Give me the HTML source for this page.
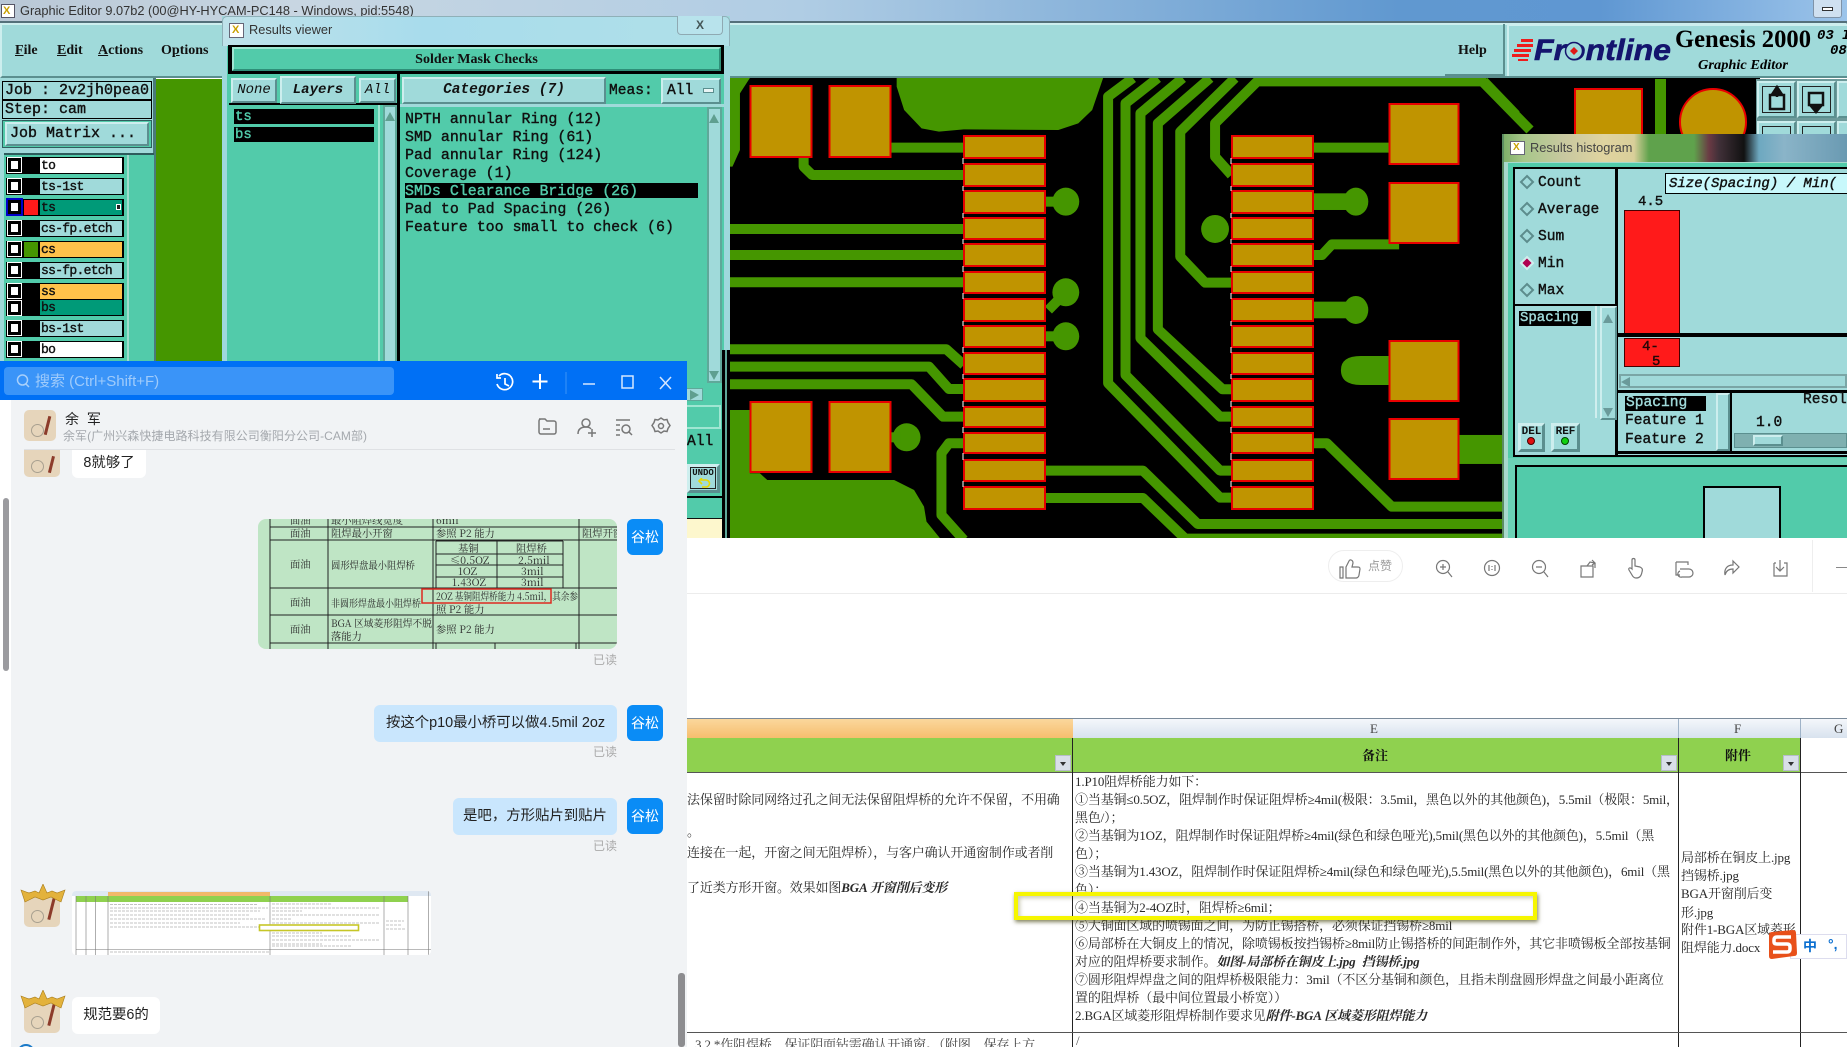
<!DOCTYPE html>
<html lang="zh"><head><meta charset="utf-8"><title>Graphic Editor</title>
<style>
html,body{margin:0;padding:0;width:1847px;height:1047px;overflow:hidden;background:#fff}
body{position:relative;font-family:"Liberation Sans","Noto Sans CJK SC",sans-serif;color:#111}
.a{position:absolute;box-sizing:border-box;white-space:nowrap}
.b{background:#a0dada;border:2px solid;border-color:#cdeeee #5b8f8f #5b8f8f #cdeeee}
.m{font-family:"Liberation Mono",monospace;font-weight:normal;-webkit-text-stroke:.4px #111;color:#111}
.s{font-family:"Liberation Serif",serif;font-weight:bold;color:#111}
.t{background:#52cbaa}
.k{background:#000}
.row{position:absolute;left:6px;width:118px;background:#000}
.row i{position:absolute;left:2px;top:1px;width:13px;height:14px;background:#fff;border:3px solid #000;outline:0;box-sizing:border-box;box-shadow:0 0 0 1px #fff}
.row b{position:absolute;left:34px;top:1px;right:2px;bottom:1px;font:normal 13px/15px "Liberation Mono",monospace;-webkit-text-stroke:.4px #111;letter-spacing:-.7px;color:#111;padding-left:1px}
.tx{font-family:"Liberation Serif","Noto Serif CJK SC",serif;font-size:13px;line-height:18px;letter-spacing:-.15px;color:#2a2a2a;white-space:nowrap;position:absolute;left:0}
.tx em{font-weight:bold;font-style:italic}
.chat{font-family:"Liberation Sans","Noto Sans CJK SC",sans-serif}
.bub{position:absolute;border-radius:6px;font-size:14.4px;line-height:37px;height:37px;text-align:center;white-space:nowrap;color:#222}
.me{background:#c9e6fd}
.av{position:absolute;left:627px;width:36px;height:36px;border-radius:6px;background:#0a8cf6;color:#fff;font-size:14px;line-height:36px;text-align:center}
.rd{position:absolute;left:593px;font-size:12px;color:#aaa;line-height:14px}
.pa{position:absolute;background:#e6d5bb;border-radius:5px;overflow:hidden}
.pa:after{content:"";position:absolute;right:7px;top:6px;width:3px;height:62%;background:#8c3b2a;transform:rotate(14deg)}
.pa:before{content:"";position:absolute;left:7px;bottom:4px;width:11px;height:11px;border:1px solid #a8a090;border-radius:50%}
.fl{position:absolute;width:16px;height:16px;background:#d9dfe8;border:1px solid #b6bdc8;box-sizing:border-box}
.fl:after{content:"";position:absolute;left:4px;top:6px;border:3px solid transparent;border-top:4px solid #333}
.ck{font-size:10.3px;fill:#2a2a2a;font-family:"Noto Serif CJK SC",serif}
</style></head><body>

<!-- top window bar -->
<div class="a" style="left:0;top:0;width:1847px;height:21px;background:linear-gradient(90deg,#b9c8d6 0,#c8d6e2 300px,#b0cde4 800px,#6098d0 1400px,#5f97d2 1600px,#9cc4ea 1847px)"></div>
<div class="a" style="left:0;top:21px;width:1847px;height:2px;background:#54707a"></div>
<div class="a" style="left:1px;top:4px;width:14px;height:14px;background:#fff;border:1px solid #556"></div>
<div class="a" style="left:3px;top:6px;color:#c8a000;font:bold 11px/11px 'Liberation Sans'">X</div>
<div class="a" style="left:20px;top:2px;font:12.8px/18px 'Liberation Sans';color:#333">Graphic Editor 9.07b2 (00@HY-HYCAM-PC148 - Windows, pid:5548)</div>
<div class="a" style="left:1813px;top:-1px;width:29px;height:19px;background:#cfe0f0;border:1px solid #7f93a8;border-radius:0 0 3px 3px"></div>
<div class="a" style="left:1822px;top:7px;width:11px;height:4px;background:#fff;border:1px solid #333"></div>

<!-- menu bar -->
<div class="a b" style="left:0;top:23px;width:1847px;height:55px;background:#a0dada"></div>
<div class="a s" style="left:15px;top:42px;font-size:14px;line-height:18px"><u>F</u>ile</div>
<div class="a s" style="left:57px;top:42px;font-size:14px;line-height:18px"><u>E</u>dit</div>
<div class="a s" style="left:98px;top:42px;font-size:14px;line-height:18px"><u>A</u>ctions</div>
<div class="a s" style="left:161px;top:42px;font-size:14px;line-height:18px">O<u>p</u>tions</div>
<div class="a" style="left:1503px;top:24px;width:2px;height:52px;background:#5b8f8f"></div>
<div class="a" style="left:1445px;top:74px;width:60px;height:2px;background:#5b8f8f"></div>
<div class="a s" style="left:1458px;top:42px;font-size:14px;line-height:18px">Help</div>
<div class="a" style="left:1507px;top:24px;width:340px;height:52px;background:#a0dada;border-left:2px solid #cdeeee;border-top:2px solid #cdeeee"></div>
<svg class="a" style="left:1507px;top:24px" width="340" height="52" viewBox="1507 24 340 52">
<g fill="#ee1c1c"><path d="M1521 39h12v3h-12zM1517 44h16v3h-16zM1514 49h17v3h-17zM1512 54h17v3h-17zM1518 59h10v2h-10z"/></g>
<text x="1534" y="60" font-family="Liberation Sans" font-weight="bold" font-style="italic" font-size="30" fill="#14146e" stroke="#14146e" stroke-width=".6" textLength="137" lengthAdjust="spacingAndGlyphs">Frontline</text>
<circle cx="1574" cy="51" r="8.500" fill="#a0dada" stroke="#14146e" stroke-width="1.500"/><path d="M1574 47l4 4-4 4-4-4z" fill="#e01818"/>
<text x="1675" y="47" font-family="Liberation Serif" font-weight="bold" font-size="25" fill="#000" textLength="136" lengthAdjust="spacingAndGlyphs">Genesis 2000</text>
<text x="1698" y="69" font-family="Liberation Serif" font-weight="bold" font-style="italic" font-size="13.5" fill="#000" textLength="90" lengthAdjust="spacingAndGlyphs">Graphic Editor</text>
<text x="1817" y="39" font-family="Liberation Mono" font-style="italic" font-weight="bold" font-size="14" fill="#000">03</text>
<text x="1842" y="39" font-family="Liberation Mono" font-style="italic" font-weight="bold" font-size="14" fill="#000">I</text>
<text x="1830" y="54" font-family="Liberation Mono" font-style="italic" font-weight="bold" font-size="14" fill="#000">08</text>
</svg>

<!-- left column -->
<div class="a" style="left:0;top:78px;width:156px;height:290px;background:#a0dada;border-right:3px solid #4a7a7a"></div>
<div class="a" style="left:156px;top:79px;width:70px;height:285px;background:#459600"></div>
<div class="a m" style="left:2px;top:81px;width:150px;height:19px;border:1px solid #000;font-size:15px;line-height:17px;padding-left:2px;background:#a0dada;overflow:hidden">Job : 2v2jh0pea0</div>
<div class="a m" style="left:2px;top:100px;width:150px;height:19px;border:1px solid #000;font-size:15px;line-height:17px;padding-left:2px;background:#a0dada">Step: cam</div>
<div class="a" style="left:2px;top:120px;width:150px;height:28px;background:#52cbaa;border:1px solid #2f5f5f"></div>
<div class="a b m" style="left:5px;top:122px;width:144px;height:24px;font-size:15px;line-height:20px;padding-left:3px;background:#a0dada">Job Matrix ...</div>
<div class="a t" style="left:4px;top:153px;width:150px;height:210px;border-top:2px solid #2d5c5c"></div>
<div class="a" style="left:127px;top:155px;width:25px;height:208px;background:#52cbaa;border-left:2px solid #9fdccc"></div>
<div class="row" style="top:157px;height:17px"><i></i><b style="background:#fff">to</b></div>
<div class="row" style="top:178px;height:17px"><i></i><b style="background:#a0dada">ts-1st</b></div>
<div class="row" style="top:199px;height:17px"><i style="box-shadow:0 0 0 2px #0000c8"></i><span class="a" style="left:18px;top:1px;width:14px;height:15px;background:#ff1a1a"></span><b style="background:#009a78">ts<span class="a" style="right:1px;top:4px;width:5px;height:6px;border:1px solid #fff;background:#222"></span></b></div>
<div class="row" style="top:220px;height:17px"><i></i><b style="background:#a0dada">cs-fp.etch</b></div>
<div class="row" style="top:241px;height:17px"><i></i><span class="a" style="left:18px;top:1px;width:14px;height:15px;background:#459600"></span><b style="background:#ffc24a">cs</b></div>
<div class="row" style="top:262px;height:17px"><i></i><b style="background:#a0dada">ss-fp.etch</b></div>
<div class="row" style="top:283px;height:33px"><i></i><i style="top:18px"></i><b style="background:#ffc24a;bottom:17px">ss</b><b style="background:#009a78;top:17px">bs</b></div>
<div class="row" style="top:320px;height:17px"><i></i><b style="background:#a0dada">bs-1st</b></div>
<div class="row" style="top:341px;height:17px"><i></i><b style="background:#fff">bo</b></div>

<!-- PCB -->
<svg class="a" style="left:730px;top:78px" width="1030" height="460" viewBox="730 78 1030 460">
<style>.tr *{vector-effect:non-scaling-stroke;fill:none;stroke:#459600;stroke-width:10;stroke-linejoin:round}.fg *{fill:#459600}.p rect{fill:#c09400;stroke:#e80000;stroke-width:2}</style>
<rect x="730" y="78" width="1030" height="460" fill="#000"/>
<g transform="translate(730,60) scale(.4975,.3333)">
<g class="fg">
<path d="M335 54L750 54L728 150L700 190L660 210L470 208L420 215L385 205L350 150L335 80Z"/>
<path d="M0 1050L40 1050L40 1240L60 1240L75 1260L330 1260L370 1290L390 1340L395 1385L425 1440L0 1440Z"/>
<path d="M0 54L40 54L20 100L20 270L5 320L0 320Z"/>
<ellipse cx="675" cy="425" rx="27" ry="42"/><ellipse cx="675" cy="697" rx="27" ry="42"/><ellipse cx="675" cy="829" rx="27" ry="42"/>
<ellipse cx="355" cy="1132" rx="28" ry="42"/><ellipse cx="1258" cy="425" rx="25" ry="42"/><ellipse cx="975" cy="507" rx="28" ry="42"/><ellipse cx="1258" cy="750" rx="25" ry="42"/>
<rect x="1172" y="400" width="75" height="50"/><rect x="1172" y="725" width="75" height="50"/>
<path d="M1325 888L1268 888Q1228 888 1228 930Q1228 975 1268 975L1325 975Z"/>
<rect x="1466" y="1125" width="100" height="87"/>
<rect x="635" y="410" width="25" height="30"/><rect x="635" y="814" width="25" height="30"/><rect x="323" y="1117" width="20" height="30"/>
</g>
<g class="tr">
<path d="M323 263H470"/><path d="M148 290V320L165 345H470"/>
<path d="M0 507H470M0 585H470M0 667H470"/>
<path d="M675 697L640 750"/>
<path d="M0 868H435L470 915M0 920H400L440 987H470M0 973H365L428 1070H470"/>
<path d="M470 1150H440L425 1180V1365L470 1440"/>
<path d="M635 1232H830L940 1392H1560"/>
<path d="M635 1314H830L915 1436H1560"/>
<path d="M810 54L760 110V970L985 1313H1010"/>
<path d="M860 54L795 130V945L985 1232H1010"/>
<path d="M910 54L825 160V835L985 1070H1010"/>
<path d="M965 54L860 190V808L990 988H1010"/>
<path d="M1015 54L905 215V590L955 668H1010"/>
<path d="M1515 64H1060L975 190V290L1008 345"/>
<path d="M1515 64L1580 165"/>
<path d="M1172 263H1325"/>
<path d="M1172 585H1190L1210 553H1345"/>
<path d="M1172 1150H1200L1330 1340H1560"/>
</g></g>
<g class="p">
<rect x="750.500" y="86" width="61" height="71"/><rect x="829.500" y="86" width="61" height="71"/>
<rect x="750.500" y="402" width="61" height="70"/><rect x="829.500" y="402" width="61" height="70"/>
<rect x="1389.500" y="104" width="69" height="60"/><rect x="1389.500" y="183" width="69" height="60"/><rect x="1389.500" y="341" width="69" height="60"/><rect x="1389.500" y="419" width="69" height="60"/>
<rect x="964" y="136" width="81" height="22"/><rect x="964" y="164" width="81" height="22"/><rect x="964" y="191" width="81" height="22"/><rect x="964" y="218" width="81" height="21"/><rect x="964" y="244" width="81" height="22"/><rect x="964" y="272" width="81" height="21"/><rect x="964" y="299" width="81" height="22"/><rect x="964" y="326" width="81" height="21"/><rect x="964" y="353" width="81" height="21"/><rect x="964" y="379" width="81" height="22"/><rect x="964" y="407" width="81" height="20"/><rect x="964" y="433" width="81" height="20"/><rect x="964" y="460" width="81" height="21"/><rect x="964" y="487" width="81" height="22"/>
<rect x="1232" y="136" width="81" height="22"/><rect x="1232" y="164" width="81" height="22"/><rect x="1232" y="191" width="81" height="22"/><rect x="1232" y="218" width="81" height="21"/><rect x="1232" y="244" width="81" height="22"/><rect x="1232" y="272" width="81" height="21"/><rect x="1232" y="299" width="81" height="22"/><rect x="1232" y="326" width="81" height="21"/><rect x="1232" y="353" width="81" height="21"/><rect x="1232" y="379" width="81" height="22"/><rect x="1232" y="407" width="81" height="20"/><rect x="1232" y="433" width="81" height="20"/><rect x="1232" y="460" width="81" height="21"/><rect x="1232" y="487" width="81" height="22"/>
</g>
<path d="M963 158v6M963 186v5M963 213v5M963 239v5M963 266v6M963 293v6M963 321v5M963 347v6M963 374v5M963 401v6M963 427v6M963 453v7M963 481v6M1231 158v6M1231 186v5M1231 213v5M1231 239v5M1231 266v6M1231 293v6M1231 321v5M1231 347v6M1231 374v5M1231 401v6M1231 427v6M1231 453v7M1231 481v6" stroke="#fff" stroke-width="1"/>
<path d="M1480 79L1530 130" stroke="#459600" stroke-width="10" fill="none"/>
<rect x="1575" y="89" width="67" height="60" fill="#c09400" stroke="#e80000" stroke-width="2"/>
<rect x="1655" y="79" width="11" height="60" fill="#459600"/>
<circle cx="1713" cy="122" r="33" fill="#c09400" stroke="#e80000" stroke-width="2"/>
</svg>
<!-- right tool buttons -->
<div class="a" style="left:1756px;top:79px;width:91px;height:56px;background:#6d9a9a"></div>
<div class="a b" style="left:1757px;top:81px;width:39px;height:37px"><div class="a" style="inset:3px;border:1px solid #222"></div></div>
<div class="a b" style="left:1797px;top:81px;width:39px;height:37px"><div class="a" style="inset:3px;border:1px solid #222"></div></div>
<div class="a b" style="left:1837px;top:81px;width:39px;height:37px"></div>
<div class="a b" style="left:1757px;top:121px;width:39px;height:20px"><div class="a" style="left:3px;top:3px;right:3px;bottom:0;border:1px solid #222"></div></div>
<div class="a b" style="left:1797px;top:121px;width:39px;height:20px"><div class="a" style="left:3px;top:3px;right:3px;bottom:0;border:1px solid #222"></div></div>
<div class="a b" style="left:1837px;top:121px;width:39px;height:20px"></div>
<svg class="a" style="left:1757px;top:81px" width="80" height="37" viewBox="0 0 80 37" fill="none" stroke="#111" stroke-width="2.5"><path d="M13 14h14v14H13z"/><path d="M20 6l-4 6h8z" fill="#111"/><path d="M20 10v6" /><path d="M52 12h14v12H52z"/><path d="M59 31l-5-6h10z" fill="#111"/></svg>

<!-- histogram window -->
<div class="a" style="left:1502px;top:134px;width:345px;height:404px;background:#a8d8cc;border-left:2px solid #5b8c62"></div>
<div class="a" style="left:1504px;top:134px;width:343px;height:28px;background:linear-gradient(90deg,#7fb06a 0,#a8c78a 20px,#c8c8a0 60px,#e0d4a0 100px,#d9cf9a 130px,#5fa24c 145px,#5fa24c 190px,#6a3a44 205px,#403038 215px,#111 240px,#6da8c0 255px,#8ab4c8 280px,#6a9ab2 343px)"></div>
<div class="a" style="left:1510px;top:141px;width:15px;height:14px;background:#fff;border:1px solid #667"></div>
<div class="a" style="left:1513px;top:143px;font:bold 10px/10px 'Liberation Sans';color:#c8a000">X</div>
<div class="a" style="left:1530px;top:139px;font:12.8px/18px 'Liberation Sans';color:#444">Results histogram</div>
<div class="a" style="left:1508px;top:163px;width:339px;height:300px;background:#52cbaa"></div>
<div class="a" style="left:1513px;top:167px;width:339px;height:290px;background:#a0dada;border:2px solid #000"></div>
<div class="a" style="left:1615px;top:167px;width:3px;height:290px;background:#000"></div>
<div class="a" style="left:1514px;top:304px;width:102px;height:2px;background:#000"></div>
<svg class="a" style="left:1516px;top:170px" width="30" height="135" viewBox="0 0 30 135">
<g fill="#a0dada" stroke-width="2"><path d="M11 6l6 6-6 6-6-6z" stroke="#5c8c8c"/><path d="M11 33l6 6-6 6-6-6z" stroke="#5c8c8c"/><path d="M11 60l6 6-6 6-6-6z" stroke="#5c8c8c"/><path d="M11 87l6 6-6 6-6-6z" stroke="#d0eded" fill="#b00050"/><path d="M11 114l6 6-6 6-6-6z" stroke="#5c8c8c"/></g></svg>
<div class="a m" style="left:1538px;top:175px;font-size:14.6px;line-height:16px">Count</div>
<div class="a m" style="left:1538px;top:202px;font-size:14.6px;line-height:16px">Average</div>
<div class="a m" style="left:1538px;top:229px;font-size:14.6px;line-height:16px">Sum</div>
<div class="a m" style="left:1538px;top:256px;font-size:14.6px;line-height:16px">Min</div>
<div class="a m" style="left:1538px;top:283px;font-size:14.6px;line-height:16px">Max</div>
<div class="a k m" style="left:1519px;top:311px;width:72px;height:15px;color:#a0dada;-webkit-text-stroke:.4px #a0dada;font-size:14px;line-height:15px;padding-left:1px">Spacing</div>
<div class="a" style="left:1595px;top:306px;width:2px;height:112px;background:#d0eeee"></div>
<div class="a b" style="left:1600px;top:306px;width:17px;height:114px;background:#a0dada"></div>
<div class="a" style="left:1603px;top:309px;border:5px solid transparent;border-bottom:9px solid #6a9a9a"></div>
<div class="a" style="left:1603px;top:408px;border:5px solid transparent;border-top:9px solid #6a9a9a"></div>
<div class="a b" style="left:1518px;top:423px;width:27px;height:29px;border-width:3px;font:bold 11px/13px 'Liberation Mono';text-align:center;color:#111">DEL</div>
<div class="a b" style="left:1551px;top:423px;width:29px;height:29px;border-width:3px;font:bold 11px/13px 'Liberation Mono';text-align:center;color:#111">REF</div>
<div class="a" style="left:1527px;top:437px;width:8px;height:8px;border-radius:50%;background:#e01010;border:1px solid #400"></div>
<div class="a" style="left:1561px;top:437px;width:8px;height:8px;border-radius:50%;background:#10d010;border:1px solid #040"></div>
<div class="a m" style="left:1665px;top:173px;width:190px;height:21px;background:#c8f8fb;border:1px solid #000;font-size:14px;font-style:italic;line-height:20px;padding-left:3px">Size(Spacing) / Min(</div>
<div class="a m" style="left:1638px;top:194px;font-size:14px;line-height:16px">4.5</div>
<div class="a" style="left:1624px;top:210px;width:56px;height:124px;background:#ff1a1a;border:1px solid #400"></div>
<div class="a k" style="left:1618px;top:333px;width:229px;height:4px"></div>
<div class="a" style="left:1624px;top:338px;width:56px;height:29px;background:#ff1a1a;border:1px solid #400"></div>
<div class="a m" style="left:1642px;top:340px;font-size:14px;line-height:15px;color:#300">4-</div>
<div class="a m" style="left:1652px;top:355px;font-size:14px;line-height:15px;color:#300">5</div>
<div class="a" style="left:1619px;top:374px;width:228px;height:14px;background:#a0dada;border:2px solid #7aa6a6"></div>
<div class="a" style="left:1621px;top:377px;border:5px solid transparent;border-right:9px solid #6a9a9a;border-left:0"></div>
<div class="a" style="left:1618px;top:390px;width:229px;height:3px;background:#000"></div>
<div class="a k m" style="left:1625px;top:396px;width:81px;height:15px;color:#a0dada;-webkit-text-stroke:.4px #a0dada;font-size:14.6px;line-height:15px;padding-left:1px">Spacing</div>
<div class="a m" style="left:1625px;top:413px;font-size:14.6px;line-height:16px">Feature 1</div>
<div class="a m" style="left:1625px;top:432px;font-size:14.6px;line-height:16px">Feature 2</div>
<div class="a b" style="left:1716px;top:393px;width:14px;height:58px"></div>
<div class="a k" style="left:1730px;top:392px;width:2px;height:60px"></div>
<div class="a m" style="left:1803px;top:392px;font-size:14.6px;line-height:16px">Resol</div>
<div class="a m" style="left:1756px;top:415px;font-size:14.6px;line-height:16px">1.0</div>
<div class="a" style="left:1734px;top:433px;width:113px;height:15px;background:#7fb0b0;border:1px solid #5b8f8f"></div>
<div class="a b" style="left:1753px;top:435px;width:30px;height:11px"></div>
<div class="a" style="left:1618px;top:451px;width:229px;height:3px;background:#000"></div>
<div class="a" style="left:1508px;top:458px;width:339px;height:80px;background:#6bd2b6"></div>
<div class="a t" style="left:1515px;top:465px;width:332px;height:73px;border:2px solid #000;border-bottom:0;border-right:0"></div>
<div class="a" style="left:1703px;top:486px;width:78px;height:52px;background:#a0dada;border:2px solid #000;border-bottom:0"></div>

<!-- document viewer area -->
<div class="a" style="left:687px;top:538px;width:1160px;height:509px;background:#fff"></div>
<div class="a" style="left:687px;top:593px;width:1160px;height:1px;background:#ececec"></div>
<div class="a" style="left:1812px;top:540px;width:1px;height:52px;background:#eee"></div>
<div class="a" style="left:1836px;top:567px;width:11px;height:1px;background:#888"></div>
<div class="a" style="left:1328px;top:550px;width:75px;height:32px;border:1px solid #eee;border-radius:16px"></div>
<div class="a" style="left:1368px;top:559px;font-size:12px;line-height:14px;color:#999">点赞</div>
<svg class="a" style="left:1335px;top:553px" width="480" height="30" viewBox="1335 553 480 30" fill="none" stroke="#777" stroke-width="1.2">
<path d="M1343 567v11h-3v-11zM1346 578h10c2 0 3-2 3-3l1-6c0-2-1-2-3-2h-5l1-4c0-3-3-4-4-2l-3 6z"/>
<circle cx="1443" cy="567" r="6.500"/><path d="M1448 572l4 5M1440 567h6M1443 564v6"/>
<circle cx="1492" cy="568" r="7.500"/><path d="M1489 565v6M1495 565v6M1492 566v1M1492 569v1"/>
<circle cx="1539" cy="567" r="6.500"/><path d="M1544 572l4 5M1536 567h6"/>
<path d="M1581 566h12v11h-12zM1587 566l3-4 5 1v5M1592 560l3 3-3 2"/>
<path d="M1632 567v-7c0-2 3-2 3 0v6l5 1c2 1 3 2 2 5-1 5-3 6-6 6-2 0-3-1-4-3l-3-5c-1-2 1-3 3-1z"/>
<path d="M1676 562h12v3M1676 562v13h4M1680 569h9a3 3 0 0 1 0 8h-7a3 3 0 0 1-2-6"/>
<path d="M1733 561l6 6-6 6v-4c-4 0-7 2-8 6-1-6 2-10 8-10z"/>
<path d="M1774 563h2M1784 563h3v13h-13v-13M1780 560v10M1776 567l4 4 4-4"/>
</svg>

<!-- spreadsheet -->
<div class="a" style="left:687px;top:718px;width:1160px;height:1px;background:#7a8a9a"></div>
<div class="a" style="left:687px;top:719px;width:386px;height:19px;background:linear-gradient(#fbd79c,#f6be6e)"></div>
<div class="a" style="left:1073px;top:719px;width:774px;height:19px;background:linear-gradient(#f4f7fb,#d8e2ee)"></div>
<div class="a" style="left:1678px;top:719px;width:1px;height:19px;background:#9fb3c8"></div>
<div class="a" style="left:1800px;top:719px;width:1px;height:19px;background:#9fb3c8"></div>
<div class="a" style="left:1370px;top:720px;font:13px/18px 'Liberation Serif';color:#444">E</div>
<div class="a" style="left:1734px;top:720px;font:13px/18px 'Liberation Serif';color:#444">F</div>
<div class="a" style="left:1834px;top:720px;font:13px/18px 'Liberation Serif';color:#444">G</div>
<div class="a" style="left:687px;top:738px;width:1113px;height:34px;background:#8fd14f"></div>
<div class="a" style="left:687px;top:772px;width:1160px;height:1px;background:#555"></div>
<div class="a" style="left:1072px;top:738px;width:1px;height:309px;background:#222"></div>
<div class="a" style="left:1678px;top:738px;width:1px;height:309px;background:#222"></div>
<div class="a" style="left:1800px;top:738px;width:1px;height:309px;background:#222"></div>
<div class="a" style="left:687px;top:1032px;width:1160px;height:1px;background:#555"></div>
<div class="a" style="left:1362px;top:746px;font:bold 13px/18px 'Noto Serif CJK SC',serif;color:#111">备注</div>
<div class="a" style="left:1725px;top:746px;font:bold 13px/18px 'Noto Serif CJK SC',serif;color:#111">附件</div>
<div class="fl" style="left:1055px;top:755px"></div><div class="fl" style="left:1661px;top:755px"></div><div class="fl" style="left:1783px;top:755px"></div>

<div class="a" style="left:687px;top:773px;width:385px;height:274px;overflow:hidden">
<div class="tx" style="top:18px">法保留时除同网络过孔之间无法保留阻焊桥的允许不保留，不用确</div>
<div class="tx" style="top:50px">。</div>
<div class="tx" style="top:71px">连接在一起，开窗之间无阻焊桥），与客户确认开通窗制作或者削</div>
<div class="tx" style="top:106px">了近类方形开窗。效果如图<em>BGA 开窗削后变形</em></div>
<div class="tx" style="top:263px;left:8px;color:#444">3.2.*作阻焊桥，保证阴面钻需确认开通窗。（附图，保存上方</div>
</div>
<div class="a" style="left:1075px;top:773px;width:603px;height:274px;overflow:hidden">
<div class="tx" style="top:0">1.P10阻焊桥能力如下：</div>
<div class="tx" style="top:18px">①当基铜≤0.5OZ，阻焊制作时保证阻焊桥≥4mil(极限：3.5mil，黑色以外的其他颜色)，5.5mil（极限：5mil，</div>
<div class="tx" style="top:36px">黑色/）；</div>
<div class="tx" style="top:54px">②当基铜为1OZ，阻焊制作时保证阻焊桥≥4mil(绿色和绿色哑光),5mil(黑色以外的其他颜色)，5.5mil（黑</div>
<div class="tx" style="top:72px">色）；</div>
<div class="tx" style="top:90px">③当基铜为1.43OZ，阻焊制作时保证阻焊桥≥4mil(绿色和绿色哑光),5.5mil(黑色以外的其他颜色)，6mil（黑</div>
<div class="tx" style="top:108px">色）；</div>
<div class="tx" style="top:126px">④当基铜为2-4OZ时，阻焊桥≥6mil；</div>
<div class="tx" style="top:144px">⑤大铜面区域的喷锡面之间，为防止锡搭桥，必须保证挡锡桥≥8mil</div>
<div class="tx" style="top:162px">⑥局部桥在大铜皮上的情况，除喷锡板按挡锡桥≥8mil防止锡搭桥的间距制作外，其它非喷锡板全部按基铜</div>
<div class="tx" style="top:180px">对应的阻焊桥要求制作。<em>如图-局部桥在铜皮上.jpg&nbsp; 挡锡桥.jpg</em></div>
<div class="tx" style="top:198px">⑦圆形阻焊焊盘之间的阻焊桥极限能力：3mil（不区分基铜和颜色，且指未削盘圆形焊盘之间最小距离位</div>
<div class="tx" style="top:216px">置的阻焊桥（最中间位置最小桥宽））</div>
<div class="tx" style="top:234px">2.BGA区域菱形阻焊桥制作要求见<em>附件-BGA 区域菱形阻焊能力</em></div>
<div class="tx" style="top:259px;left:1px;color:#555">/</div>
</div>
<div class="a" style="left:1681px;top:773px;width:118px;height:259px;overflow:hidden">
<div class="tx" style="top:76px">局部桥在铜皮上.jpg</div>
<div class="tx" style="top:94px">挡锡桥.jpg</div>
<div class="tx" style="top:112px">BGA开窗削后变</div>
<div class="tx" style="top:131px">形.jpg</div>
<div class="tx" style="top:148px">附件1-BGA区域菱形</div>
<div class="tx" style="top:166px">阻焊能力.docx</div>
</div>
<!-- yellow highlight -->
<div class="a" style="left:1014px;top:892px;width:523px;height:28px;border:4px solid #f6f600;box-shadow:1px 2px 4px rgba(60,60,0,.65), inset 2px 2px 4px rgba(80,80,0,.3)"></div>
<!-- sogou -->
<div class="a" style="left:1790px;top:934px;width:57px;height:25px;background:#fff;border:1px solid #dde"></div>
<svg class="a" style="left:1766px;top:929px" width="32" height="32" viewBox="0 0 32 32"><path d="M3 6Q3 3 6 3L27 1Q30 1 30 4L31 24Q31 27 28 27L6 30Q3 30 3 27z" fill="#e8501a"/><path d="M25 8H11Q8 8 8 11V13Q8 15 11 15H21Q24 15 24 18V20Q24 23 21 23H7" fill="none" stroke="#fff" stroke-width="3.500"/></svg>
<div class="a" style="left:1803px;top:938px;font:bold 14px/17px 'Noto Sans CJK SC',sans-serif;color:#0b6fd0">中</div>
<div class="a" style="left:1828px;top:936px;font:bold 14px/17px 'Liberation Sans';color:#0b6fd0">°,</div>

<!-- results viewer -->
<div class="a" style="left:222px;top:16px;width:508px;height:522px;background:#52cbaa;border-left:5px solid #9fd8dc;border-right:6px solid #9fd8dc"></div>
<div class="a" style="left:222px;top:16px;width:508px;height:30px;background:linear-gradient(90deg,#bfe2ea,#a8dcec 40%,#b0e0e8);border-radius:5px 5px 0 0;border:1px solid #8fb0b8;border-bottom:0"></div>
<div class="a" style="left:229px;top:23px;width:15px;height:15px;background:#fff;border:1px solid #667"></div>
<div class="a" style="left:232px;top:25px;font:bold 11px/11px 'Liberation Sans';color:#c8a000">X</div>
<div class="a" style="left:249px;top:21px;font:12.8px/18px 'Liberation Sans';color:#333">Results viewer</div>
<div class="a" style="left:677px;top:16px;width:46px;height:19px;border:1px solid #8fa9b2;border-top:0;border-radius:0 0 4px 4px;background:#b8e3ec;text-align:center;font:bold 12px/18px 'Liberation Sans';color:#455">X</div>
<div class="a k" style="left:228px;top:45px;width:496px;height:29px"></div>
<div class="a" style="left:232px;top:47px;width:489px;height:24px;background:#52cbaa;border:2px solid;border-color:#9fe6d2 #2f8f78 #2f8f78 #9fe6d2;text-align:center" ><span class="s" style="font-size:14px;line-height:22px">Solder Mask Checks</span></div>
<div class="a" style="left:229px;top:74px;width:170px;height:31px;background:#52cbaa;border-bottom:2px solid #000"></div>
<div class="a b" style="left:231px;top:78px;width:46px;height:25px;font:italic 14px/21px 'Liberation Mono';text-align:center;color:#111">None</div>
<div class="a b" style="left:280px;top:76px;width:76px;height:28px;font:italic bold 14px/24px 'Liberation Mono';text-align:center;color:#111">Layers</div>
<div class="a b" style="left:359px;top:78px;width:37px;height:25px;font:italic 14px/21px 'Liberation Mono';text-align:center;color:#111">All</div>
<div class="a k" style="left:397px;top:74px;width:3px;height:300px"></div>
<div class="a b" style="left:402px;top:77px;width:204px;height:27px;font:italic bold 14.5px/23px 'Liberation Mono';text-align:center;color:#111">Categories (7)</div>
<div class="a m" style="left:609px;top:82px;font-size:14.6px;line-height:18px">Meas:</div>
<div class="a b m" style="left:661px;top:78px;width:60px;height:26px;font-size:14.6px;line-height:22px;padding-left:4px">All<span class="a" style="right:5px;top:8px;width:11px;height:5px;background:#e8f5f5;border:1px solid #5b8f8f"></span></div>
<div class="a" style="left:400px;top:104px;width:324px;height:3px;background:#a0dada"></div>
<div class="a k" style="left:234px;top:109px;width:140px;height:15px;color:#52cbaa;font:14px/17px 'Liberation Mono';-webkit-text-stroke:.4px #52cbaa;padding-left:1px">ts</div>
<div class="a k" style="left:234px;top:127px;width:140px;height:15px;color:#52cbaa;font:14px/17px 'Liberation Mono';-webkit-text-stroke:.4px #52cbaa;padding-left:1px">bs</div>
<div class="a" style="left:378px;top:105px;width:2px;height:258px;background:#9fe6d2"></div>
<div class="a" style="left:383px;top:105px;width:14px;height:258px;background:#a0dada;border:2px solid #5fa899"></div>
<div class="a" style="left:385px;top:107px;border:5px solid transparent;border-bottom:9px solid #5f9f90"></div>
<div class="a k" style="left:405px;top:183px;width:293px;height:15px"></div>
<div class="a m" style="left:405px;top:111px;font-size:14.950px;line-height:18px;white-space:pre">NPTH annular Ring (12)
SMD annular Ring (61)
Pad annular Ring (124)
Coverage (1)
<span style="color:#52cbaa;-webkit-text-stroke:.4px #52cbaa">SMDs Clearance Bridge (26)</span>
Pad to Pad Spacing (26)
Feature too small to check (6)</div>
<!-- visible strip beneath chat -->
<div class="a" style="left:687px;top:361px;width:35px;height:177px;background:#52cbaa"></div>
<div class="a" style="left:707px;top:107px;width:15px;height:276px;background:#a0dada;border:2px solid #5fa899"></div>
<div class="a" style="left:709px;top:109px;border:5px solid transparent;border-bottom:9px solid #5f9f90"></div>
<div class="a" style="left:709px;top:371px;border:5px solid transparent;border-top:9px solid #5f9f90;border-bottom:0"></div>
<div class="a" style="left:687px;top:388px;width:16px;height:13px;background:#a0dada;border:1px solid #5fa899;border-left:0"></div>
<div class="a" style="left:690px;top:390px;border:5px solid transparent;border-left:9px solid #5f9f90;border-right:0"></div>
<div class="a" style="left:687px;top:405px;width:34px;height:24px;border-top:2px solid #9fe6d2;border-right:2px solid #9fe6d2;border-bottom:2px solid #9fe6d2"></div>
<div class="a m" style="left:687px;top:434px;font-size:14.6px;line-height:16px">All</div>
<div class="a b" style="left:687px;top:464px;width:33px;height:29px;border-width:3px"></div>
<div class="a" style="left:690px;top:467px;width:26px;height:22px;border:1px solid #222;font:bold 9px/11px 'Liberation Mono';text-align:center;color:#111;background:#a0dada">UNDO</div>
<svg class="a" style="left:697px;top:478px" width="14" height="11" viewBox="0 0 14 11"><path d="M4 2h5a3 3 0 0 1 0 7H5M5 0L2 3l3 3" fill="none" stroke="#e8d800" stroke-width="1.600"/></svg>
<div class="a k" style="left:687px;top:496px;width:35px;height:2px"></div>
<div class="a" style="left:687px;top:518px;width:35px;height:20px;background:#fdf7cd;border-top:1px solid #111"></div>
<div class="a k" style="left:722px;top:350px;width:3px;height:188px"></div>
<div class="a" style="left:725px;top:350px;width:2px;height:188px;background:#5fa899"></div>
<div class="a k" style="left:727px;top:350px;width:3px;height:188px"></div>

<!-- chat window -->
<div class="a" style="left:0;top:361px;width:687px;height:686px;background:#f1f3f5;overflow:hidden" >
<div class="a" style="left:0;top:39px;width:11px;height:647px;background:#fff"></div>
<div class="a" style="left:3px;top:137px;width:6px;height:173px;background:#9b9b9f;border-radius:3px"></div>
<div class="a" style="left:678px;top:612px;width:7px;height:74px;background:#8d8d90;border-radius:3px"></div>
</div>
<div class="a" style="left:0;top:361px;width:687px;height:39px;background:#0070f5"></div>
<div class="a" style="left:4px;top:367px;width:390px;height:28px;background:#3a94f8;border-radius:4px"></div>
<div class="a chat" style="left:35px;top:373px;font-size:15px;line-height:17px;color:#9fcbfb">搜索 (Ctrl+Shift+F)</div>
<svg class="a" style="left:15px;top:372px" width="18" height="18" viewBox="0 0 18 18" fill="none" stroke="#a8d0fb" stroke-width="1.500"><circle cx="7.500" cy="8" r="5"/><path d="M11 12l3 3"/></svg>
<svg class="a" style="left:490px;top:365px" width="190" height="32" viewBox="490 365 190 32" fill="none" stroke="#fff" stroke-width="1.500">
<path d="M499 376a8 8 0 1 1-2 8M497 374v4h4" stroke-width="1.700"/><path d="M505 378v6l4 2" stroke-width="1.700"/>
<path d="M540 374v15M532.500 381.500h15" stroke-width="2" /><path d="M566 372v22" stroke="#3b93f6" stroke-width="1"/>
<path d="M583 384h12" stroke="#d5e7ff"/><rect x="622" y="376" width="11" height="12" stroke="#d5e7ff"/><path d="M660 377l11 12M671 377l-11 12" stroke="#d5e7ff"/></svg>

<div class="pa" style="left:24px;top:410px;width:32px;height:31px"></div>
<div class="a chat" style="left:65px;top:410px;font-size:14px;line-height:18px;color:#222;letter-spacing:2px">余 军</div>
<div class="a chat" style="left:63px;top:428px;font-size:12px;line-height:16px;color:#a4a8ad;letter-spacing:.05px">余军(广州兴森快捷电路科技有限公司衡阳分公司-CAM部)</div>
<svg class="a" style="left:535px;top:415px" width="140" height="24" viewBox="535 415 140 24" fill="none" stroke="#777" stroke-width="1.500">
<path d="M539 419h6l2 2h7a2 2 0 0 1 2 2v9a2 2 0 0 1-2 2h-13a2 2 0 0 1-2-2v-11a2 2 0 0 1 2-2zM543 429h7"/>
<circle cx="586" cy="423" r="4"/><path d="M578 434c0-5 3-7 8-7 2 0 4 .5 5 2M588 433h8M592 429v8"/>
<path d="M616 420h14M616 425h4M616 430h4M616 435h4"/><circle cx="626" cy="429" r="4"/><path d="M629 432l3 3"/>
<path d="M661 418l3 2 3-.5 1 3 2 3-2 3-1 3-3-.5-3 2-3-2-3 .5-1-3-2-3 2-3 1-3 3 .5z"/><circle cx="661" cy="426" r="2.500"/></svg>
<div class="a" style="left:24px;top:449px;width:651px;height:1px;background:#dfe1e4"></div>

<div class="pa" style="left:24px;top:450px;width:36px;height:27px;border-radius:0 0 5px 5px"></div>
<div class="bub" style="left:72px;top:450px;width:74px;height:28px;line-height:26px;background:#fff;border-radius:0 0 6px 6px">8就够了</div>

<svg class="a" style="left:258px;top:519px;border-radius:8px" width="359" height="130" viewBox="258 519 359 130">
<rect x="258" y="519" width="359" height="130" fill="#bfe5c5"/>
<g stroke="#222" stroke-width="1" fill="none">
<path d="M270 519v130M328 519v130M433 519v130M579 519v130"/>
<path d="M270 527h347M270 540h347M270 588h347M270 615h347M270 643h347" />
<path d="M436 541h127M436 554h127M436 565h127M436 577h127M436 541v47M497 541v47M563 541v47M436 643v6M495 643v6M576 643v6"/>
</g>
<g class="ck">
<text x="290" y="524">面油</text><text x="331" y="524">最小阻焊线宽度</text><text x="436" y="524">6mil</text>
<text x="290" y="537">面油</text><text x="331" y="537">阻焊最小开窗</text><text x="436" y="537">参照 P2 能力</text><text x="582" y="537">阻焊开窗</text>
<text x="290" y="568">面油</text><text x="331" y="569" textLength="84" lengthAdjust="spacingAndGlyphs">圆形焊盘最小阻焊桥</text>
<text x="458" y="552">基铜</text><text x="516" y="552">阻焊桥</text>
<text x="450" y="564">≤0.5OZ</text><text x="518" y="564">2.5mil</text>
<text x="458" y="575">1OZ</text><text x="521" y="575">3mil</text>
<text x="452" y="586">1.43OZ</text><text x="521" y="586">3mil</text>
<text x="290" y="606">面油</text><text x="331" y="607" textLength="90" lengthAdjust="spacingAndGlyphs">非圆形焊盘最小阻焊桥</text>
<text x="436" y="600" textLength="142" lengthAdjust="spacingAndGlyphs">2OZ 基铜阻焊桥能力 4.5mil，其余参</text><text x="436" y="613">照 P2 能力</text>
<text x="290" y="633">面油</text><text x="331" y="627" textLength="101" lengthAdjust="spacingAndGlyphs">BGA 区域菱形阻焊不脱</text><text x="331" y="640">落能力</text><text x="436" y="633">参照 P2 能力</text>
</g>
<rect x="422" y="589" width="129" height="14" fill="none" stroke="#dd2a20" stroke-width="1.500"/>
</svg>
<div class="av" style="top:519px">谷松</div>
<div class="rd" style="top:653px">已读</div>

<div class="bub me" style="left:374px;top:705px;width:243px">按这个p10最小桥可以做4.5mil 2oz</div>
<div class="av" style="top:705px">谷松</div>
<div class="rd" style="top:745px">已读</div>
<div class="bub me" style="left:453px;top:798px;width:164px">是吧，方形贴片到贴片</div>
<div class="av" style="top:798px">谷松</div>
<div class="rd" style="top:839px">已读</div>

<div class="pa" style="left:24px;top:892px;width:36px;height:35px"></div>
<svg class="a" style="left:20px;top:884px" width="46" height="24" viewBox="0 0 46 24"><path d="M1 6l8 3 6-2 4 2 4-9 4 9 5-2 5 2 8-3-4 12-10-5-8 3-8-3-10 5z" fill="#e3b23c" stroke="#a87c1a" stroke-width=".6"/></svg>
<svg class="a" style="left:72px;top:891px;border-radius:4px" width="359" height="64" viewBox="72 891 359 64">
<rect x="72" y="891" width="359" height="64" fill="#fff"/><rect x="72" y="891" width="359" height="5" fill="#dfe8f2"/>
<rect x="108" y="892" width="162" height="4" fill="#f2b96a"/>
<rect x="76" y="896" width="332" height="6" fill="#8fd14f"/>
<path d="M76 896v59M86 896v59M95.500 896v59M108 896v59M270 896v59M384 896v59M408 896v59M76 949.500h355M428.500 891v64" stroke="#777" stroke-width=".6" fill="none"/>
<g stroke="#555" stroke-width="1" opacity=".35" stroke-dasharray="3 1"><path d="M110 904.500h148M110 908h158M110 911h150M110 915h140M110 919h155M110 923h130M110 927h150M272 904h60M272 908h108M272 911h30M272 915h108M272 919h20M272 923h108M272 927h20M272 933h50M272 936h80M272 940h108M272 944h50M272 946h80M386 921h18M386 925h16M386 929h20M110 952h160"/></g>
<rect x="259.500" y="925" width="99" height="5.500" fill="#fff" stroke="#c6c627" stroke-width="1.600"/></svg>

<div class="pa" style="left:24px;top:998px;width:36px;height:35px"></div>
<svg class="a" style="left:20px;top:990px" width="46" height="24" viewBox="0 0 46 24"><path d="M1 6l8 3 6-2 4 2 4-9 4 9 5-2 5 2 8-3-4 12-10-5-8 3-8-3-10 5z" fill="#e3b23c" stroke="#a87c1a" stroke-width=".6"/></svg>
<div class="bub" style="left:72px;top:997px;width:88px;background:#fff">规范要6的</div>
<div class="a" style="left:17px;top:1044px;width:18px;height:18px;border:2px solid #1b7ac8;border-radius:50%"></div>
</body></html>
